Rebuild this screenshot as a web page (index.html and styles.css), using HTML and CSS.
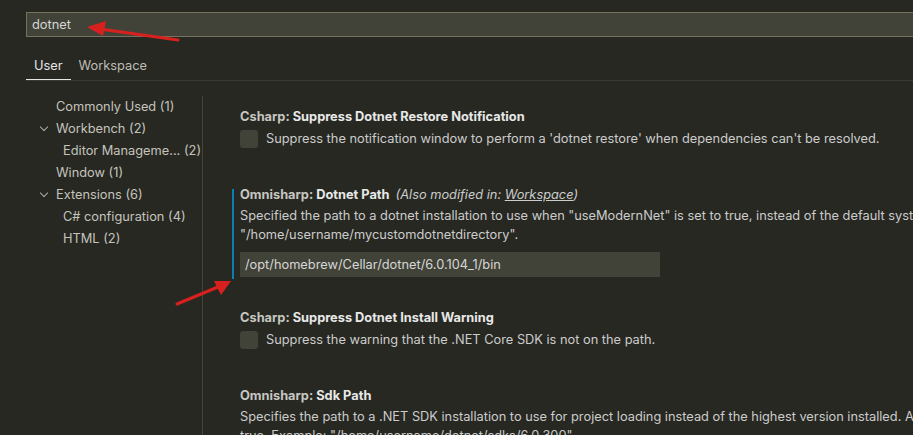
FILE: index.html
```html
<!DOCTYPE html>
<html lang="en">
<head>
	<meta charset="utf-8" />
	<title>Settings</title>
	<link rel="stylesheet" href="styles.css">
</head>
<body>
	<div id="header">
		<div class="search">dotnet</div>
		<div class="tabs">
			<span class="tab active">User</span>
			<span class="tab">Workspace</span>
		</div>
	</div>
	<div id="main">
		<ul class="toc">
			<li>Commonly Used (1)</li>
			<li class="group"><span class="chev"></span>Workbench (2)</li>
			<li class="sub">Editor Manageme... (2)</li>
			<li>Window (1)</li>
			<li class="group"><span class="chev"></span>Extensions (6)</li>
			<li class="sub">C# configuration (4)</li>
			<li class="sub">HTML (2)</li>
		</ul>
		<div class="settings">
			<div class="item">
				<div class="title"><span class="cat">Csharp: </span>Suppress Dotnet Restore Notification</div>
				<div class="check-row"><span class="box"></span>Suppress the notification window to perform a 'dotnet restore' when dependencies can't be resolved.</div>
			</div>
			<div class="item modified">
				<div class="title"><span class="cat">Omnisharp: </span>Dotnet Path <span class="also">(Also modified in: <u>Workspace</u>)</span></div>
				<div class="desc">Specified the path to a dotnet installation to use when "useModernNet" is set to true, instead of the default system dotnet.</div>
				<div class="desc">"/home/username/mycustomdotnetdirectory".</div>
				<div class="input">/opt/homebrew/Cellar/dotnet/6.0.104_1/bin</div>
			</div>
			<div class="item">
				<div class="title"><span class="cat">Csharp: </span>Suppress Dotnet Install Warning</div>
				<div class="check-row"><span class="box"></span>Suppress the warning that the .NET Core SDK is not on the path.</div>
			</div>
			<div class="item">
				<div class="title"><span class="cat">Omnisharp: </span>Sdk Path</div>
				<div class="desc">Specifies the path to a .NET SDK installation to use for project loading instead of the highest version installed. Applies when "useModernNet" is set to</div>
				<div class="desc">true. Example: "/home/username/dotnet/sdks/6.0.300".</div>
			</div>
		</div>
	</div>
	<svg class="arrows" width="913" height="435" viewBox="0 0 913 435">
		<g stroke="#d8201e" stroke-width="3" fill="#d8201e" stroke-linecap="round">
			<line x1="178" y1="40" x2="100" y2="29" />
			<polygon points="87,27 106,21 103,36" stroke="none" />
			<line x1="177" y1="304" x2="218" y2="287" />
			<polygon points="231,281 214,281 221,295" stroke="none" />
		</g>
	</svg>
</body>
</html>
```

FILE: styles.css
```css
body {margin:0; padding:0; width:913px; height:435px; overflow:hidden; position:relative; background:#272822; color:#cccccc; font-family:Inter,"Liberation Sans",Arial,sans-serif; font-size:12.8px;}

#header {padding:12px 0 0 26px;}
.search {height:23px; line-height:23px; padding-left:5px; background:#414339; border:1px solid #75715e; border-right:0; color:#d6d6d6;}
.tabs {display:flex; margin-top:15px; border-bottom:1px solid #3b3a32; height:28px;}
.tab {padding:0 8px; line-height:27px; color:#bdbdb5;}
.tab.active {color:#e6e6e6; border-bottom:1px solid #e6e6e6;}

#main {display:flex; margin-top:15px;}

.toc {list-style:none; margin:0; padding:0; width:202px; flex:none; border-right:1px solid #45443b; height:400px;}
.toc li {height:22px; line-height:22px; padding-left:56px; color:#c4c4bd; position:relative; white-space:nowrap;}
.toc li.sub {padding-left:63px;}
.chev {position:absolute; left:41px; top:6px; width:5px; height:5px; border-right:1px solid #aaa; border-bottom:1px solid #aaa; transform:rotate(45deg);}

.settings {padding:10px 0 0 29px; width:1000px; flex:none;}
.item {padding-left:8px; margin-bottom:36px; position:relative;}
.item.modified {margin-bottom:30px;}
.item.modified::before {content:""; position:absolute; left:0; top:5px; bottom:-2px; width:2px; background:#0b7fb3;}
.title {font-weight:bold; color:#e8e8e8; line-height:22px;}
.cat {color:#c6c6c0;}
.also {font-weight:normal; font-style:italic; color:#cccccc; margin-left:3px;}
.check-row {display:flex; align-items:center; margin-top:2px; line-height:18px; white-space:nowrap;}
.box {width:18px; height:18px; border-radius:3px; background:#414339; margin-right:8px; flex:none;}
.desc {line-height:19px; white-space:nowrap;}
.input {width:415px; height:25px; line-height:25px; padding-left:5px; margin-top:8px; background:#414339; color:#d6d6d6;}

.arrows {position:absolute; left:0; top:0;}
```
